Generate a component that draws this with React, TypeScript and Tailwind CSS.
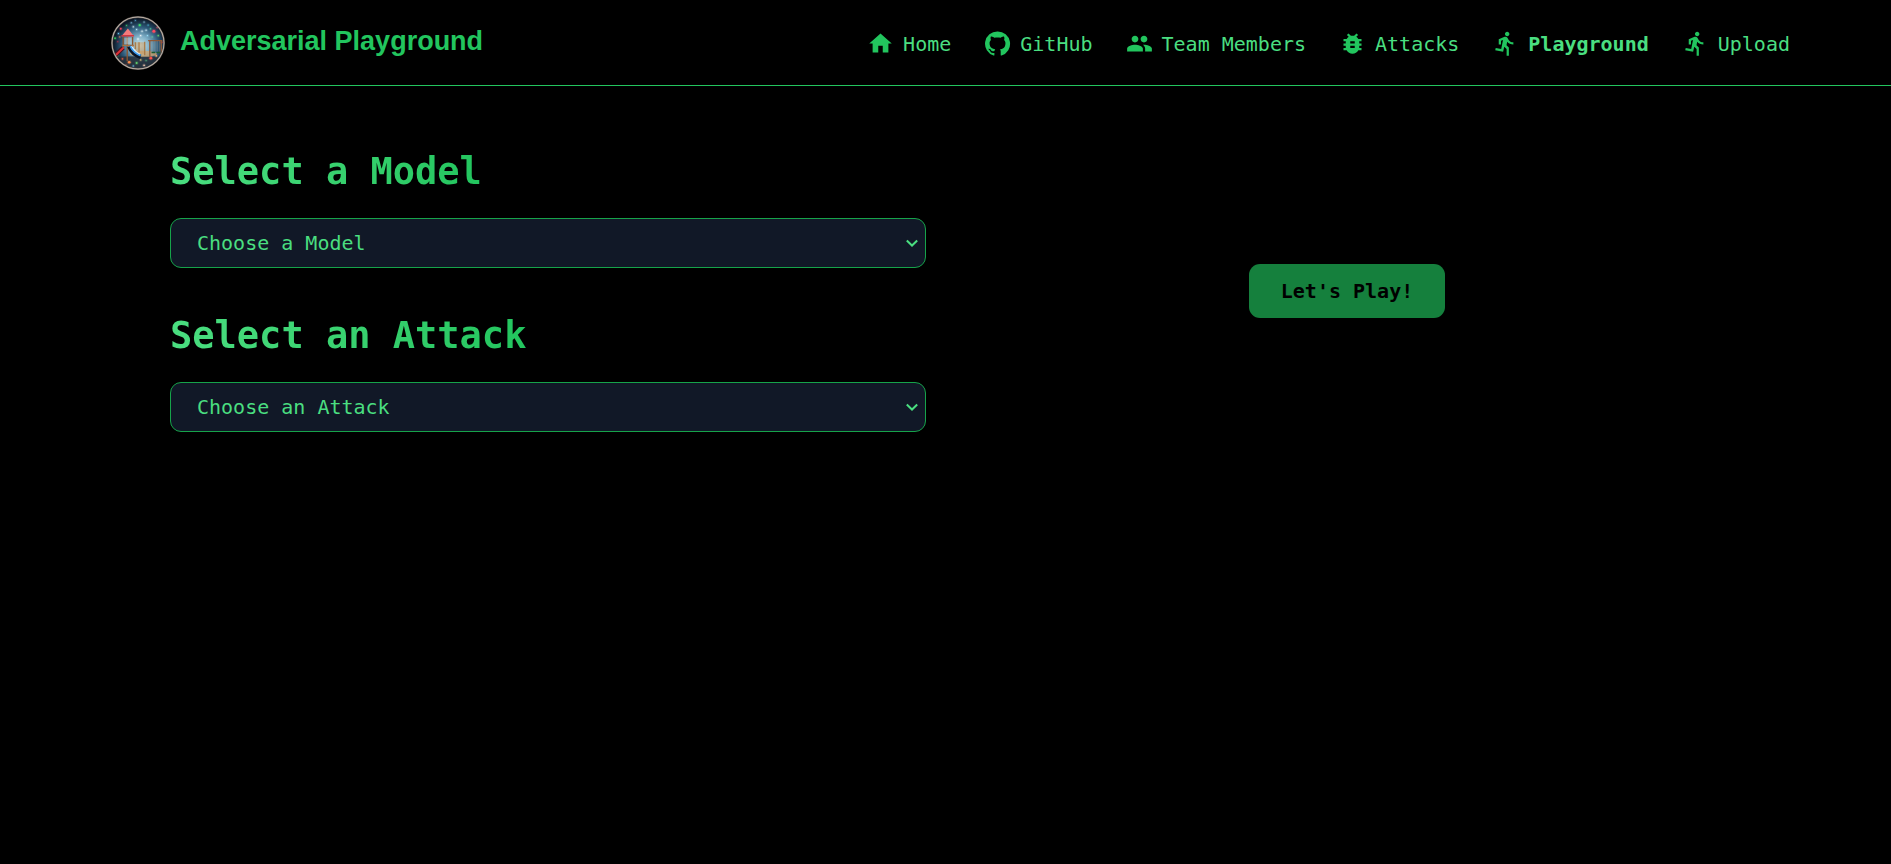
import type { ReactNode } from "react";
import { MdBugReport, MdDirectionsRun, MdHome, MdPeople } from "react-icons/md";

const iconClass = "size-[27px] shrink-0 text-[#22c55e]";

function GitHubIcon() {
  return (
    <svg viewBox="0 0 24 24" fill="currentColor" className={iconClass} aria-hidden="true">
      <path d="M12 1.27a11 11 0 00-3.48 21.46c.55.09.73-.28.73-.55v-1.84c-3.03.64-3.67-1.46-3.67-1.46-.55-1.29-1.28-1.65-1.28-1.65-.92-.65.1-.65.1-.65 1.1 0 1.73 1.1 1.73 1.1.92 1.65 2.57 1.2 3.21.92a2 2 0 01.64-1.47c-2.47-.27-5.04-1.19-5.04-5.5 0-1.1.46-2.1 1.2-2.84a3.76 3.76 0 010-2.93s.91-.28 3.11 1.1c1.8-.49 3.7-.49 5.5 0 2.1-1.38 3.02-1.1 3.02-1.1a3.76 3.76 0 01.1 2.93c.83.74 1.2 1.74 1.2 2.94 0 4.21-2.57 5.13-5.04 5.4.45.37.82.92.82 2.02v3.03c0 .27.1.64.73.55A11 11 0 0012 1.27" />
    </svg>
  );
}

// Coloured lights scattered over the night sky: x, y, radius, colour.
const lights: [number, number, number, string][] = [
  [29, 38, 3, "#f0455f"], [46, 28, 2, "#39b46a"], [60, 20, 1.5, "#8fd8ff"],
  [72, 13, 1.5, "#5fb3e0"], [85, 27, 3.5, "#3ddc6a"], [98, 18, 1.5, "#a8e0ff"],
  [110, 27, 2, "#4ab8d8"], [127, 45, 4.5, "#ff4a5f"], [117, 38, 2, "#58d58a"],
  [137, 34, 2, "#e2506a"], [104, 42, 2, "#d8f3ff"], [92, 45, 2, "#e8fbff"],
  [76, 40, 2, "#b9ecff"], [66, 32, 2, "#e8fbff"], [22, 52, 2, "#6fd2ff"],
  [12, 66, 3, "#2fbf5a"], [20, 76, 2, "#a83048"], [26, 62, 2, "#e07a50"],
  [108, 58, 2, "#9de4ff"], [122, 62, 2, "#62c7a0"], [140, 58, 2.5, "#58c56a"],
  [150, 78, 3, "#c8384c"], [88, 58, 2, "#ffffff"], [80, 68, 2, "#ffffff"],
  [20, 118, 2, "#3fae64"], [34, 127, 2.5, "#d2553f"],
  [54, 137, 4, "#ff8a4a"], [76, 139, 3, "#61d26c"], [98, 146, 2.5, "#f3c9b0"],
  [118, 125, 4, "#ff4f4a"], [104, 132, 2, "#4fae7a"], [134, 118, 2.5, "#ffb066"],
  [66, 148, 2, "#68b6e0"], [88, 130, 2, "#f0d080"], [44, 146, 2, "#d86a5a"],
];

function Logo() {
  return (
    <svg viewBox="0 0 160 160" className="size-[54px] shrink-0" role="img" aria-label="Adversarial Playground">
      <defs>
        <radialGradient id="sky" cx="54%" cy="55%" r="50%">
          <stop offset="0" stopColor="#cfe6ea" />
          <stop offset="0.35" stopColor="#7fb0c8" />
          <stop offset="0.7" stopColor="#2c5878" />
          <stop offset="1" stopColor="#0d1826" />
        </radialGradient>
        <clipPath id="disc">
          <circle cx="80" cy="80" r="76" />
        </clipPath>
      </defs>
      <g clipPath="url(#disc)">
        <rect width="160" height="160" fill="url(#sky)" />
        <path d="M0 122Q80 116 160 122V160H0Z" fill="#252d36" opacity="0.85" />
        <ellipse cx="96" cy="112" rx="40" ry="9" fill="#d9a66a" opacity="0.7" />
        {lights.map(([x, y, r, color]) => (
          <g key={`${x}-${y}`} fill={color}>
            <circle cx={x} cy={y} r={r + 3} opacity="0.2" />
            <circle cx={x} cy={y} r={r} />
          </g>
        ))}
        <path d="M36 62V98M64 62V92M48 62V134" stroke="#8a5530" strokeWidth="4" />
        <path d="M34 87H68" stroke="#a9713f" strokeWidth="4" />
        <path d="M39 64H61V84H39Z" fill="#cfd6cf" opacity="0.5" />
        <path d="M50 37L68 60H31Z" fill="#f47a7c" />
        <path d="M31 56H68V61H31Z" fill="#cf3740" />
        <path d="M36 94L9 120" stroke="#4a1420" strokeWidth="13" />
        <path d="M38 93L12 118" stroke="#dd3238" strokeWidth="6" />
        <path d="M70 78H101V112H70Z" fill="#c9985c" opacity="0.5" />
        <path d="M72 78V98M83 78V108M100 76V116" stroke="#a87640" strokeWidth="3.5" fill="none" />
        <path d="M54 90Q64 114 88 121" stroke="#0a1526" strokeWidth="13" fill="none" />
        <path d="M57 89Q67 109 88 117" stroke="#3f9df0" strokeWidth="6" fill="none" />
        <path d="M61 89Q69 105 86 113" stroke="#e4f6ff" strokeWidth="3" fill="none" />
        <path d="M115 72V122M149 72V116M110 73H152" stroke="#8f5a38" strokeWidth="4" />
        <path d="M122 74V106M130 74V106M137 74V106M144 74V106" stroke="#b09880" strokeWidth="1" />
        <path d="M120 108H131M135 108H146" stroke="#1a5a30" strokeWidth="4" />
      </g>
      <circle cx="80" cy="80" r="77" fill="none" stroke="#4b4643" strokeWidth="6" />
      <circle cx="80" cy="80" r="77" fill="none" stroke="#bdb2a8" strokeWidth="3" />
    </svg>
  );
}

const links: { label: string; icon: ReactNode; active?: boolean }[] = [
  { label: "Home", icon: <MdHome className={iconClass} /> },
  { label: "GitHub", icon: <GitHubIcon /> },
  { label: "Team Members", icon: <MdPeople className={iconClass} /> },
  { label: "Attacks", icon: <MdBugReport className={iconClass} /> },
  { label: "Playground", icon: <MdDirectionsRun className={iconClass} />, active: true },
  { label: "Upload", icon: <MdDirectionsRun className={iconClass} /> },
];

function Picker({ id, title, placeholder }: { id: string; title: string; placeholder: string }) {
  return (
    <div>
      <h2 className="mb-6 w-fit bg-linear-to-r from-[#4ade80] to-[#22c55e] bg-clip-text text-[37px] leading-[45px] font-bold text-transparent">
        <label htmlFor={id}>{title}</label>
      </h2>
      <div className="relative">
        <select
          id={id}
          defaultValue=""
          className="block h-[50px] w-full appearance-none rounded-[11px] border border-[#16a34a] bg-[#111827] pr-8 pl-[26px] text-xl text-[#4ade80]"
        >
          <option value="">{placeholder}</option>
        </select>
        <svg
          viewBox="0 0 12 8"
          className="pointer-events-none absolute top-[21px] right-2 h-2 w-3 text-[#4ade80]"
          fill="none"
          stroke="currentColor"
          strokeWidth="2"
          aria-hidden="true"
        >
          <path d="M0.8 1.5L6 6.5L11.2 1.5" />
        </svg>
      </div>
    </div>
  );
}

export default function App() {
  return (
    <div className="min-h-screen bg-black font-['DejaVu_Sans_Mono',monospace] text-xl text-[#4ade80]">
      <header className="flex items-center justify-between border-b border-[#22c55e] pt-4 pr-[101px] pb-[15px] pl-[111px]">
        <a href="#" className="flex gap-[15px]">
          <Logo />
          <span className="pt-[5px] font-['Liberation_Sans',sans-serif] text-[27px] leading-10 font-bold text-[#22c55e]">
            Adversarial Playground
          </span>
        </a>
        <nav className="flex gap-[33px]">
          {links.map(({ label, icon, active }) => (
            <a key={label} href="#" className={active ? "flex items-center gap-[9px] font-bold" : "flex items-center gap-[9px]"}>
              {icon}
              <span className="pt-0.5">{label}</span>
            </a>
          ))}
        </nav>
      </header>
      <main className="grid grid-cols-2 items-center gap-[43px] pt-[63px] pr-[166px] pl-[170px]">
        <div className="flex flex-col gap-[45px]">
          <Picker id="model" title="Select a Model" placeholder="Choose a Model" />
          <Picker id="attack" title="Select an Attack" placeholder="Choose an Attack" />
        </div>
        <button type="button" className="h-[54px] w-[196px] justify-self-center rounded-[11px] bg-[#15803d] font-bold text-black">
          Let's Play!
        </button>
      </main>
    </div>
  );
}
